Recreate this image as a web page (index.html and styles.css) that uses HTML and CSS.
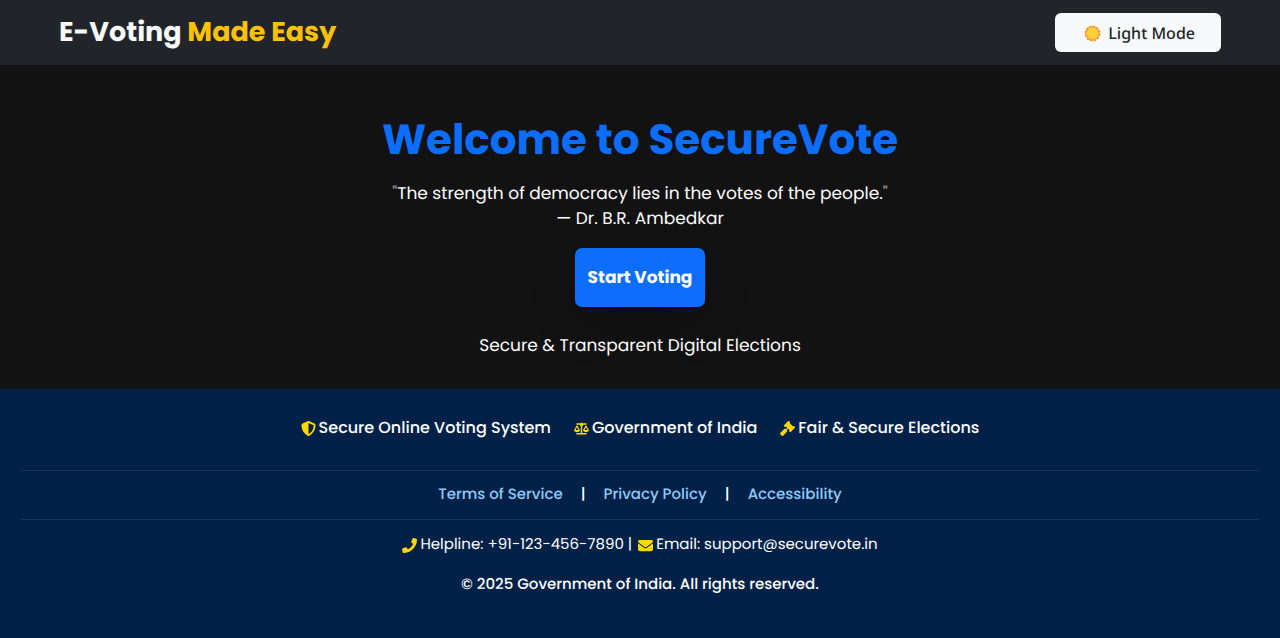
FILE: index.html
```html
<!DOCTYPE html>
<html lang="en">
<head>
<meta charset="utf-8">
<meta name="viewport" content="width=device-width, initial-scale=1">
<title>SecureVote</title>
<link rel="stylesheet" href="styles.css">
</head>
<body>
<header class="topbar">
  <div class="brand">E-Voting <span class="brand-accent">Made Easy</span></div>
  <button class="theme-toggle" type="button">
    <svg class="sun" viewBox="0 0 32 32" aria-hidden="true">
      <circle cx="16" cy="16" r="13.5" fill="none" stroke="#ff8a2b" stroke-width="3" stroke-dasharray="4.4 2.67"/>
      <circle cx="16" cy="16" r="12.5" fill="#ffd03b" stroke="#ff9a35" stroke-width="2"/>
    </svg>
    <span>Light Mode</span>
  </button>
</header>
<main class="hero">
  <h1 class="hero-title">Welcome to SecureVote</h1>
  <p class="quote"><span class="mark">"</span>The strength of democracy lies in the votes of the people.<span class="mark">"</span><br>— Dr. B.R. Ambedkar</p>
  <button class="start" type="button">Start Voting</button>
  <p class="tagline">Secure &amp; Transparent Digital Elections</p>
</main>
<footer class="footer">
  <div class="features">
    <span class="feature"><svg class="icon" viewBox="0 0 512 512" aria-hidden="true"><path d="M256 0c4.6 0 9.2 1 13.4 2.9L457.7 82.8c22 9.3 38.4 31 38.3 57.2c-.5 99.2-41.3 280.7-213.6 363.2c-16.7 8-36.1 8-52.8 0C57.3 420.7 16.5 239.2 16 140c-.1-26.2 16.3-47.9 38.3-57.2L242.7 2.9C246.8 1 251.4 0 256 0zm0 66.8V444.8C394 378 431.1 230.1 432 141.4L256 66.8z"/></svg>Secure Online Voting System</span>
    <span class="feature"><svg class="icon" viewBox="0 0 640 512" aria-hidden="true"><path d="M288 32a32 32 0 0 1 64 0h160a32 32 0 0 1 0 64H398a80 80 0 0 1-46 51v301h160a32 32 0 0 1 0 64H128a32 32 0 0 1 0-64h160V147a80 80 0 0 1-46-51H128a32 32 0 0 1 0-64zM128 128c12 0 22 6 28 16l96 176c2 53-55 96-124 96S2 373 4 320l96-176c6-10 16-16 28-16zm0 78L66 320h124zM512 128c12 0 22 6 28 16l96 176c2 53-55 96-124 96s-126-43-124-96l96-176c6-10 16-16 28-16zm0 78l-62 114h124z"/></svg>Government of India</span>
    <span class="feature"><svg class="icon" viewBox="0 0 512 512" aria-hidden="true"><path d="M318 9c-12-12-32-12-45 0L145 137c-12 13-12 33 0 45l17 17c12 12 32 12 45 0l4-4 37 37-50 50-9-9c-13-13-33-13-46 0L9 407c-12 13-12 33 0 45l51 51c12 12 32 12 45 0l134-134c13-13 13-33 0-46l-9-9 50-50 37 37-4 4c-12 13-12 33 0 45l17 17c12 12 32 12 45 0l128-128c12-13 12-33 0-45l-17-17c-12-12-32-12-45 0l-4 4L327 71l4-4c12-13 12-33 0-45z"/></svg>Fair &amp; Secure Elections</span>
  </div>
  <nav class="links" aria-label="Legal">
    <a href="#terms">Terms of Service</a><span>|</span><a href="#privacy">Privacy Policy</a><span>|</span><a href="#accessibility">Accessibility</a>
  </nav>
  <div class="contact">
    <span class="feature"><svg class="icon" viewBox="0 0 512 512" aria-hidden="true"><path d="M493.4 24.6l-104-24c-11.3-2.6-22.9 3.3-27.5 13.9l-48 112c-4.2 9.8-1.4 21.3 6.9 28l60.6 49.6c-36 76.7-98.9 140.5-177.2 177.2l-49.6-60.6c-6.8-8.3-18.2-11.1-28-6.9l-112 48C3.9 366.5-2 378.1.6 389.4l24 104C27.1 504.2 36.7 512 48 512c256.1 0 464-207.5 464-464 0-11.2-7.7-20.9-18.6-23.4z"/></svg>Helpline: +91-123-456-7890 |</span>
    <span class="feature"><svg class="icon" viewBox="0 0 512 512" aria-hidden="true"><path d="M48 64C21.5 64 0 85.5 0 112c0 15.1 7.1 29.3 19.2 38.4L236.8 313.6c11.4 8.5 27 8.5 38.4 0L492.8 150.4c12.1-9.1 19.2-23.3 19.2-38.4c0-26.5-21.5-48-48-48H48zM0 176V384c0 35.3 28.7 64 64 64H448c35.3 0 64-28.7 64-64V176L294.4 339.2c-22.8 17.1-54 17.1-76.8 0L0 176z"/></svg>Email: support@securevote.in</span>
  </div>
  <p class="copyright">© 2025 Government of India. All rights reserved.</p>
</footer>
</body>
</html>
```
FILE: styles.css
```css
* { box-sizing: border-box; }
body {
  margin: 0;
  min-height: 100vh;
  display: flex;
  flex-direction: column;
  background: #121212;
  color: #fff;
  font-family: Poppins, Inter, sans-serif;
  font-size: 17px;
  line-height: 25px;
  text-rendering: geometricPrecision;
}
h1, p { margin: 0; }
button { border: 0; font-family: inherit; text-rendering: inherit; cursor: pointer; }

.topbar {
  display: flex;
  align-items: center;
  justify-content: space-between;
  padding: 13px 59px;
  background: #212529;
}
.brand { font-size: 27px; font-weight: 700; line-height: 39px; color: #f8f9fa; }
.brand-accent { color: #ffc107; }
.theme-toggle {
  display: flex;
  align-items: center;
  gap: 7px;
  padding: 8px 26px 6px 29px;
  border-radius: 6px;
  background: #f8f9fa;
  color: #212529;
  font-family: "Segoe UI", "Noto Sans", sans-serif;
  font-size: 16px;
  font-weight: 500;
  line-height: 25px;
}
.sun { width: 17px; height: 17px; }

.hero {
  display: flex;
  flex-direction: column;
  align-items: center;
  padding: 49px 24px 31px;
  text-align: center;
}
.hero-title { font-size: 42px; font-weight: 700; line-height: 52px; color: #0d6efd; }
.quote { margin-top: 15px; }
.mark { opacity: 0.6; }
.start {
  margin-top: 17px;
  padding: 17px 13px;
  border-radius: 7px;
  background: #0d6efd;
  color: #fff;
  font-size: 17px;
  font-weight: 700;
  line-height: 25px;
  box-shadow: 0 16px 48px rgba(0, 0, 0, 0.18);
}
.tagline { margin-top: 26px; }

.footer {
  flex: 1;
  padding: 26px 21px 40px;
  background: #002147;
  text-align: center;
}
.features, .links, .contact {
  display: flex;
  flex-wrap: wrap;
  justify-content: center;
}
.features { gap: 23px; padding-bottom: 30px; font-size: 16px; font-weight: 500; }
.feature { display: flex; align-items: center; gap: 3px; }
.icon { width: 15px; height: 15px; margin-top: 2px; fill: #ffd700; }
.links {
  gap: 18px;
  padding: 11px 0 12px;
  border: solid #17355a;
  border-width: 1px 0;
  font-size: 15px;
  font-weight: 500;
}
.links a { color: #90caf9; text-decoration: none; }
.contact { gap: 6px; padding-top: 12px; font-size: 15px; }
.copyright { padding-top: 15px; font-size: 15px; font-weight: 500; }
```
